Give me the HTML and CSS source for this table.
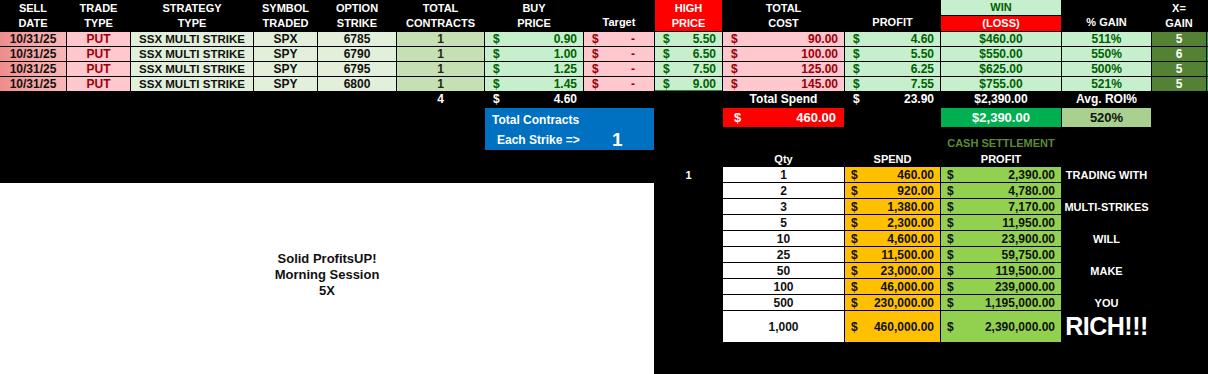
FILE: index.html
```html
<!DOCTYPE html>
<html lang="en">
<head>
<meta charset="utf-8">
<title>SSX Multi Strike Trade Sheet</title>
<link rel="stylesheet" href="styles.css">
</head>
<body>
<div class="sheet">
  <!-- header -->
  <div class="hd c1 h12">SELL<br>DATE</div>
  <div class="hd c2 h12">TRADE<br>TYPE</div>
  <div class="hd c3 h12">STRATEGY<br>TYPE</div>
  <div class="hd c4 h12">SYMBOL<br>TRADED</div>
  <div class="hd c5 h12">OPTION<br>STRIKE</div>
  <div class="hd c6 h12">TOTAL<br>CONTRACTS</div>
  <div class="hd c7 h12">BUY<br>PRICE</div>
  <div class="hd hd-low c8 h12">Target</div>
  <div class="hd hd-red c9 h12">HIGH<br>PRICE</div>
  <div class="hd c10 h12">TOTAL<br>COST</div>
  <div class="hd hd-low c11 h12">PROFIT</div>
  <div class="hd hd-win c12 r1">WIN</div>
  <div class="hd hd-loss c12 r2">(LOSS)</div>
  <div class="hd hd-low c13 h12">% GAIN</div>
  <div class="hd c14 h12">X=<br>GAIN</div>

  <!-- row 1 -->
  <div class="cell date c1 r3">10/31/25</div>
  <div class="cell put c2 r3">PUT</div>
  <div class="cell strat c3 r3">SSX MULTI STRIKE</div>
  <div class="cell sym c4 r3">SPX</div>
  <div class="cell sym c5 r3">6785</div>
  <div class="cell qty c6 r3">1</div>
  <div class="cell acc good c7 r3"><span>$</span><span>0.90</span></div>
  <div class="cell acc bad dash c8 r3"><span>$</span><span>-</span></div>
  <div class="cell acc good c9 r3"><span>$</span><span>5.50</span></div>
  <div class="cell acc bad c10 r3"><span>$</span><span>90.00</span></div>
  <div class="cell acc good c11 r3"><span>$</span><span>4.60</span></div>
  <div class="cell center good c12 r3">$460.00</div>
  <div class="cell center good c13 r3">511%</div>
  <div class="cell xg c14 r3">5</div>
  <div class="edge c15 r3"></div>

  <!-- row 2 -->
  <div class="cell date c1 r4">10/31/25</div>
  <div class="cell put c2 r4">PUT</div>
  <div class="cell strat c3 r4">SSX MULTI STRIKE</div>
  <div class="cell sym c4 r4">SPY</div>
  <div class="cell sym c5 r4">6790</div>
  <div class="cell qty c6 r4">1</div>
  <div class="cell acc good c7 r4"><span>$</span><span>1.00</span></div>
  <div class="cell acc bad dash c8 r4"><span>$</span><span>-</span></div>
  <div class="cell acc good c9 r4"><span>$</span><span>6.50</span></div>
  <div class="cell acc bad c10 r4"><span>$</span><span>100.00</span></div>
  <div class="cell acc good c11 r4"><span>$</span><span>5.50</span></div>
  <div class="cell center good c12 r4">$550.00</div>
  <div class="cell center good c13 r4">550%</div>
  <div class="cell xg c14 r4">6</div>
  <div class="edge c15 r4"></div>

  <!-- row 3 -->
  <div class="cell date c1 r5">10/31/25</div>
  <div class="cell put c2 r5">PUT</div>
  <div class="cell strat c3 r5">SSX MULTI STRIKE</div>
  <div class="cell sym c4 r5">SPY</div>
  <div class="cell sym c5 r5">6795</div>
  <div class="cell qty c6 r5">1</div>
  <div class="cell acc good c7 r5"><span>$</span><span>1.25</span></div>
  <div class="cell acc bad dash c8 r5"><span>$</span><span>-</span></div>
  <div class="cell acc good c9 r5"><span>$</span><span>7.50</span></div>
  <div class="cell acc bad c10 r5"><span>$</span><span>125.00</span></div>
  <div class="cell acc good c11 r5"><span>$</span><span>6.25</span></div>
  <div class="cell center good c12 r5">$625.00</div>
  <div class="cell center good c13 r5">500%</div>
  <div class="cell xg c14 r5">5</div>
  <div class="edge c15 r5"></div>

  <!-- row 4 -->
  <div class="cell date c1 r6">10/31/25</div>
  <div class="cell put c2 r6">PUT</div>
  <div class="cell strat c3 r6">SSX MULTI STRIKE</div>
  <div class="cell sym c4 r6">SPY</div>
  <div class="cell sym c5 r6">6800</div>
  <div class="cell qty c6 r6">1</div>
  <div class="cell acc good c7 r6"><span>$</span><span>1.45</span></div>
  <div class="cell acc bad dash c8 r6"><span>$</span><span>-</span></div>
  <div class="cell acc good last c9 r6"><span>$</span><span>9.00</span></div>
  <div class="cell acc bad c10 r6"><span>$</span><span>145.00</span></div>
  <div class="cell acc good c11 r6"><span>$</span><span>7.55</span></div>
  <div class="cell center good c12 r6">$755.00</div>
  <div class="cell center good c13 r6">521%</div>
  <div class="cell xg c14 r6">5</div>
  <div class="edge c15 r6"></div>

  <!-- totals -->
  <div class="tot center c6 r7">4</div>
  <div class="tot acc c7 r7"><span>$</span><span>4.60</span></div>
  <div class="tot center c10 r7">Total Spend</div>
  <div class="tot acc c11 r7"><span>$</span><span>23.90</span></div>
  <div class="tot center c12 r7">$2,390.00</div>
  <div class="tot center c13 r7">Avg. ROI%</div>

  <!-- summary boxes -->
  <div class="blue c78 r89">
    <div class="blue-top">Total Contracts</div>
    <div class="blue-bot"><span class="blue-label">Each Strike =&gt;</span><span class="big">1</span></div>
  </div>
  <div class="redbox acc c10 r8"><span>$</span><span>460.00</span></div>
  <div class="greenbox c12 r8">$2,390.00</div>
  <div class="roibox c13 r8">520%</div>
  <div class="cash c12 r9">CASH SETTLEMENT</div>

  <!-- cash settlement table -->
  <div class="th c10 r10">Qty</div>
  <div class="th c11 r10">SPEND</div>
  <div class="th c12 r10">PROFIT</div>

  <div class="th c9 r11">1</div>
  <div class="q c10 r11">1</div>
  <div class="sp acc c11 r11"><span>$</span><span>460.00</span></div>
  <div class="pf acc c12 r11"><span>$</span><span>2,390.00</span></div>
  <div class="msg c13 r11">TRADING WITH</div>

  <div class="note c18 r1221">
    <p>Solid ProfitsUP!</p>
    <p>Morning Session</p>
    <p>5X</p>
  </div>

  <div class="q c10 r12">2</div>
  <div class="sp acc c11 r12"><span>$</span><span>920.00</span></div>
  <div class="pf acc c12 r12"><span>$</span><span>4,780.00</span></div>

  <div class="q c10 r13">3</div>
  <div class="sp acc c11 r13"><span>$</span><span>1,380.00</span></div>
  <div class="pf acc c12 r13"><span>$</span><span>7,170.00</span></div>
  <div class="msg c13 r13">MULTI-STRIKES</div>

  <div class="q c10 r14">5</div>
  <div class="sp acc c11 r14"><span>$</span><span>2,300.00</span></div>
  <div class="pf acc c12 r14"><span>$</span><span>11,950.00</span></div>

  <div class="q c10 r15">10</div>
  <div class="sp acc c11 r15"><span>$</span><span>4,600.00</span></div>
  <div class="pf acc c12 r15"><span>$</span><span>23,900.00</span></div>
  <div class="msg c13 r15">WILL</div>

  <div class="q c10 r16">25</div>
  <div class="sp acc c11 r16"><span>$</span><span>11,500.00</span></div>
  <div class="pf acc c12 r16"><span>$</span><span>59,750.00</span></div>

  <div class="q c10 r17">50</div>
  <div class="sp acc c11 r17"><span>$</span><span>23,000.00</span></div>
  <div class="pf acc c12 r17"><span>$</span><span>119,500.00</span></div>
  <div class="msg c13 r17">MAKE</div>

  <div class="q c10 r18">100</div>
  <div class="sp acc c11 r18"><span>$</span><span>46,000.00</span></div>
  <div class="pf acc c12 r18"><span>$</span><span>239,000.00</span></div>

  <div class="q c10 r19">500</div>
  <div class="sp acc c11 r19"><span>$</span><span>230,000.00</span></div>
  <div class="pf acc c12 r19"><span>$</span><span>1,195,000.00</span></div>
  <div class="msg c13 r19">YOU</div>

  <div class="q tall c10 r20">1,000</div>
  <div class="sp acc tall c11 r20"><span>$</span><span>460,000.00</span></div>
  <div class="pf acc tall c12 r20"><span>$</span><span>2,390,000.00</span></div>
  <div class="rich c13 r20">RICH!!!</div>
</div>
</body>
</html>
```
FILE: styles.css
```css
html, body {
  margin: 0;
  padding: 0;
  background: #000;
}

.sheet {
  display: grid;
  width: 1208px;
  height: 374px;
  grid-template-columns: 66px 63px 122px 63px 78px 87px 98px 70px 67px 121px 95px 120px 89px 54px 1fr;
  grid-template-rows: 15px 15px 14px 14px 14px 14px 15px 19px 22px 15px 15px 15px 15px 15px 15px 15px 15px 15px 15px 31px 1fr;
  column-gap: 1px;
  row-gap: 1px;
  font-family: "Liberation Sans", Arial, sans-serif;
  font-weight: bold;
  font-size: 12px;
  color: #fff;
  overflow: hidden;
}

/* column placement */
.c1 { grid-column: 1; }
.c2 { grid-column: 2; }
.c3 { grid-column: 3; }
.c4 { grid-column: 4; }
.c5 { grid-column: 5; }
.c6 { grid-column: 6; }
.c7 { grid-column: 7; }
.c8 { grid-column: 8; }
.c9 { grid-column: 9; }
.c10 { grid-column: 10; }
.c11 { grid-column: 11; }
.c12 { grid-column: 12; }
.c13 { grid-column: 13; }
.c14 { grid-column: 14; }
.c15 { grid-column: 15; }
.c78 { grid-column: 7 / 9; }
.c18 { grid-column: 1 / 9; }

/* row placement */
.h12 { grid-row: 1 / 3; }
.r1 { grid-row: 1; }
.r2 { grid-row: 2; }
.r3 { grid-row: 3; }
.r4 { grid-row: 4; }
.r5 { grid-row: 5; }
.r6 { grid-row: 6; }
.r7 { grid-row: 7; }
.r8 { grid-row: 8; }
.r9 { grid-row: 9; }
.r89 { grid-row: 8 / 10; }
.r10 { grid-row: 10; }
.r11 { grid-row: 11; }
.r12 { grid-row: 12; }
.r13 { grid-row: 13; }
.r14 { grid-row: 14; }
.r15 { grid-row: 15; }
.r16 { grid-row: 16; }
.r17 { grid-row: 17; }
.r18 { grid-row: 18; }
.r19 { grid-row: 19; }
.r20 { grid-row: 20; }
.r1221 { grid-row: 12 / 22; }

/* header */
.hd {
  display: flex;
  flex-direction: column;
  justify-content: center;
  align-items: center;
  text-align: center;
  font-size: 11px;
  line-height: 15px;
  color: #fff;
}
.hd-low { justify-content: flex-end; padding-bottom: 1px; }
.hd-red { background: #ff0000; }
.hd-win { background: #c6efce; color: #006100; }
.hd-loss { background: #ff0000; color: #fff; }

/* data cells */
.cell {
  display: flex;
  align-items: center;
  justify-content: center;
  line-height: 14px;
  white-space: nowrap;
}
.date { background: linear-gradient(to right, #ee8c8c, #f7aaaa 60%, #fbb6b6); color: #111; }
.put { background: #ffc7ce; color: #9c0006; }
.strat { background: #e2efda; color: #111; font-size: 11.5px; }
.sym { background: #e2efda; color: #111; }
.qty { background: #c6e0b4; color: #1e2b14; }
.good { background: #c6efce; color: #006100; }
.bad { background: #ffc7ce; color: #9c0006; }
.xg { background: #548235; color: #fff; }
.edge { background: #00b050; width: 2px; }
.last { box-shadow: inset 0 -1px 0 #2e7d32; }

.acc {
  display: flex;
  justify-content: space-between;
  align-items: center;
  padding: 0 6px 0 8px;
  white-space: nowrap;
}
.dash { padding-right: 19px; }
.center {
  display: flex;
  justify-content: center;
  align-items: center;
}

/* totals row */
.tot { color: #fff; line-height: 15px; }

/* summary boxes */
.blue {
  background: #0070c0;
  color: #fff;
  display: flex;
  flex-direction: column;
  padding: 4px 0 0 7px;
}
.blue-top { line-height: 16px; }
.blue-bot {
  display: flex;
  align-items: center;
  margin-top: 2px;
  padding-left: 5px;
}
.blue-label { width: 115px; }
.big { font-size: 19px; line-height: 20px; }

.redbox {
  background: #ff0000;
  color: #fff;
  font-size: 13px;
  padding: 0 8px 0 11px;
}
.greenbox {
  background: #00b050;
  color: #fff;
  font-size: 13px;
  display: flex;
  justify-content: center;
  align-items: center;
}
.roibox {
  background: #a9d08e;
  color: #111;
  font-size: 13px;
  display: flex;
  justify-content: center;
  align-items: center;
}
.cash {
  color: #5b8a36;
  font-size: 11px;
  display: flex;
  justify-content: center;
  align-items: flex-end;
  padding-bottom: 1px;
  white-space: nowrap;
}

/* cash settlement table */
.th {
  display: flex;
  justify-content: center;
  align-items: center;
  font-size: 11px;
  color: #fff;
}
.q {
  background: #fff;
  color: #111;
  display: flex;
  justify-content: center;
  align-items: center;
}
.sp { background: #ffc000; color: #111; padding: 0 6px; }
.pf { background: #92d050; color: #111; padding: 0 6px; }
.tall { align-items: flex-end; padding-bottom: 8px; }
.msg {
  display: flex;
  justify-content: center;
  align-items: center;
  font-size: 11px;
  white-space: nowrap;
}
.rich {
  display: flex;
  justify-content: center;
  align-items: center;
  font-size: 25px;
  letter-spacing: -0.5px;
  white-space: nowrap;
}

/* white note box */
.note {
  background: #fff;
  color: #111;
  display: flex;
  flex-direction: column;
  justify-content: center;
  align-items: center;
  padding-bottom: 8px;
  font-size: 13px;
  line-height: 16px;
}
.note p { margin: 0; }
```
